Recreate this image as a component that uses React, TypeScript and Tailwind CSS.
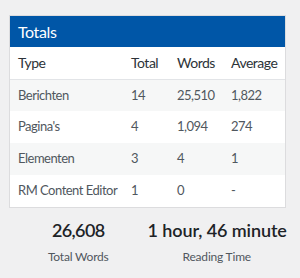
export default function App() {
  const rows = [
    ["Berichten", "14", "25,510", "1,822"],
    ["Pagina's", "4", "1,094", "274"],
    ["Elementen", "3", "4", "1"],
    ["RM Content Editor", "1", "0", "-"],
  ];
  return (
    <div className="w-[300px] h-[278px] bg-[#f0f0f1] pt-[15px] pl-[9px]" style={{ fontFamily: 'Lato, "Noto Sans", sans-serif' }}>
      <div className="w-[277px] border border-[#dcdcde] bg-white">
        <div className="h-[31px] bg-[#0056a7] text-white text-[16px] leading-[31px] pl-[8px] tracking-[-0.4px]">Totals</div>
        <table className="w-full border-collapse text-left table-fixed">
          <colgroup>
            <col className="w-[113px]" />
            <col className="w-[46px]" />
            <col className="w-[54px]" />
            <col />
          </colgroup>
          <thead>
            <tr className="h-[32px] border-b border-[#e2e4e7] text-[14px] text-[#2c3338] tracking-[-0.5px]">
              <th className="font-normal pl-[8px]">Type</th>
              <th className="font-normal pl-[8px]">Total</th>
              <th className="font-normal pl-[8px]">Words</th>
              <th className="font-normal pl-[8px]">Average</th>
            </tr>
          </thead>
          <tbody className="text-[13px] text-[#50575e] tracking-[-0.5px]">
            {rows.map((r, i) => (
              <tr key={i} className={`h-[32px] ${i % 2 === 0 ? "bg-[#f6f7f7]" : "bg-white"}`}>
                {r.map((c, j) => (
                  <td key={j} className="pl-[8px] whitespace-nowrap">{c}</td>
                ))}
              </tr>
            ))}
          </tbody>
        </table>
      </div>
      <div className="w-[277px] grid grid-cols-2 mt-[10px] text-center">
        <div>
          <div className="text-[18px] font-semibold text-[#1d2327] leading-[24px] tracking-[-0.6px]">26,608</div>
          <div className="text-[12px] text-[#50575e] leading-[16px] mt-[7px] tracking-[-0.2px]">Total Words</div>
        </div>
        <div>
          <div className="text-[18px] font-semibold text-[#1d2327] leading-[24px] whitespace-nowrap tracking-[-0.1px]">1 hour, 46 minute</div>
          <div className="text-[12px] text-[#50575e] leading-[16px] mt-[7px] tracking-[-0.2px]">Reading Time</div>
        </div>
      </div>
    </div>
  );
}
